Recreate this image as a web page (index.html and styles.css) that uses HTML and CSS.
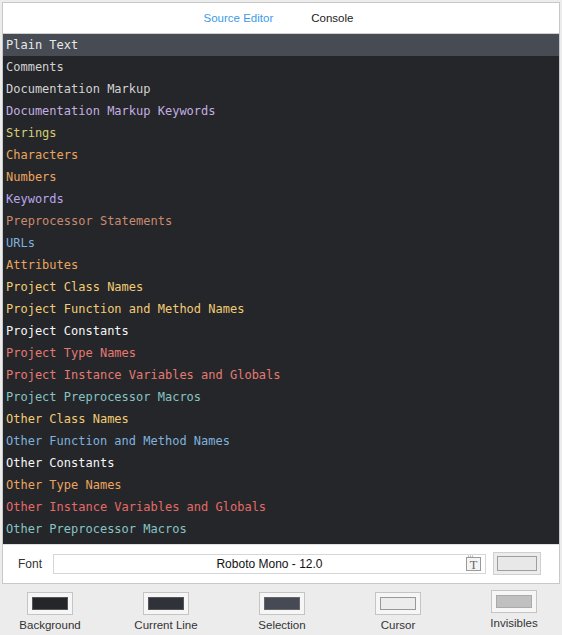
FILE: index.html
```html
<!DOCTYPE html>
<html>
<head>
<meta charset="utf-8">
<link rel="stylesheet" href="styles.css">
</head>
<body>
<div class="panel">
  <div class="tabs">
    <span class="tab active">Source Editor</span>
    <span class="tab">Console</span>
  </div>
  <ul class="list">
    <li class="sel c-plain">Plain Text</li>
    <li class="c-comment">Comments</li>
    <li class="c-comment">Documentation Markup</li>
    <li class="c-dockw">Documentation Markup Keywords</li>
    <li class="c-string">Strings</li>
    <li class="c-char">Characters</li>
    <li class="c-num">Numbers</li>
    <li class="c-kw">Keywords</li>
    <li class="c-pre">Preprocessor Statements</li>
    <li class="c-url">URLs</li>
    <li class="c-char">Attributes</li>
    <li class="c-class">Project Class Names</li>
    <li class="c-class">Project Function and Method Names</li>
    <li class="c-white">Project Constants</li>
    <li class="c-type">Project Type Names</li>
    <li class="c-type">Project Instance Variables and Globals</li>
    <li class="c-macro">Project Preprocessor Macros</li>
    <li class="c-class">Other Class Names</li>
    <li class="c-url">Other Function and Method Names</li>
    <li class="c-white">Other Constants</li>
    <li class="c-char">Other Type Names</li>
    <li class="c-red">Other Instance Variables and Globals</li>
    <li class="c-macro">Other Preprocessor Macros</li>
  </ul>
  <div class="fontrow">
    <span class="fontlabel">Font</span>
    <div class="fontfield">
      <span class="fontname">Roboto Mono - 12.0</span>
      <svg class="ticon" width="17" height="17" viewBox="0 0 17 17">
        <rect x="1.5" y="2.5" width="14" height="13" fill="#f4f4f4" stroke="#9a9a9a"/>
        <circle cx="3.5" cy="1.2" r="0.6" fill="#9a9a9a"/>
        <circle cx="5.5" cy="1.2" r="0.6" fill="#9a9a9a"/>
        <circle cx="7.5" cy="1.2" r="0.6" fill="#9a9a9a"/>
        <text x="8.5" y="13.8" text-anchor="middle" font-family="Liberation Serif, serif" font-size="12.5" fill="#666">T</text>
      </svg>
    </div>
    <div class="fontbtn"><span class="fontbtn-inner"></span></div>
  </div>
</div>
<div class="swatches">
  <div class="sw"><div class="well"><span class="chip bg"></span></div><span class="swlabel">Background</span></div>
  <div class="sw"><div class="well"><span class="chip cl"></span></div><span class="swlabel">Current Line</span></div>
  <div class="sw"><div class="well"><span class="chip se"></span></div><span class="swlabel">Selection</span></div>
  <div class="sw"><div class="well"><span class="chip cu"></span></div><span class="swlabel">Cursor</span></div>
  <div class="sw up"><div class="well"><span class="chip inv"></span></div><span class="swlabel">Invisibles</span></div>
</div>
</body>
</html>
```

FILE: styles.css
```css
* { box-sizing: border-box; }
html, body { margin: 0; padding: 0; }
body {
  background: #ececec;
  width: 562px;
  height: 635px;
  overflow: hidden;
  font-family: "Liberation Sans", Arial, sans-serif;
  padding: 2px 2px 0 2px;
}
.panel {
  width: 558px;
  height: 582px;
  background: #ffffff;
  border: 1px solid #c8c8c8;
  display: flex;
  flex-direction: column;
}
.tabs {
  height: 31px;
  flex: none;
  display: flex;
  justify-content: center;
  align-items: center;
  gap: 38px;
  font-size: 11.5px;
  color: #222;
  border-bottom: 1px solid #d0d0d0;
  padding-right: 5px;
  padding-bottom: 1px;
}
.tab.active { color: #3d9ae8; }
.list {
  list-style: none;
  flex: none;
  margin: 0;
  padding: 0 0 4px 0;
  background: #25262a;
  font-family: "DejaVu Sans Mono", "Liberation Mono", monospace;
  font-size: 12px;
  height: 510px;
}
.list li {
  height: 22px;
  line-height: 22px;
  padding-left: 3px;
  white-space: nowrap;
}
.list li.sel { background: #474b53; }
.c-plain { color: #e8e8e8; }
.c-comment { color: #d2d2d2; }
.c-dockw { color: #c3aee0; }
.c-string { color: #d6cd74; }
.c-char { color: #eba55e; }
.c-num { color: #eba55e; }
.c-kw { color: #b9a6ec; }
.c-pre { color: #c98a6e; }
.c-url { color: #7fb2dd; }
.c-class { color: #f2cc74; }
.c-white { color: #f6f6f6; }
.c-type { color: #e67a72; }
.c-red { color: #e46b66; }
.c-macro { color: #86c4c4; }
.fontrow {
  flex: 1;
  display: flex;
  align-items: center;
  padding: 0 17px 1px 15px;
  border-top: 1px solid #e0e0e0;
}
.fontlabel {
  font-size: 12px;
  color: #333;
  width: 35px;
}
.fontfield {
  position: relative;
  width: 433px;
  height: 20px;
  border: 1px solid #d6d6d6;
  display: flex;
  align-items: center;
  justify-content: center;
}
.fontname {
  font-size: 12px;
  color: #111;
}
.ticon {
  position: absolute;
  right: 3px;
  top: 0;
}
.fontbtn {
  margin-left: 7px;
  width: 48px;
  height: 23px;
  border: 1px solid #cfcfcf;
  background: #ececec;
  display: flex;
  align-items: center;
  justify-content: center;
}
.fontbtn-inner {
  width: 40px;
  height: 15px;
  border: 1px solid #9e9e9e;
  background: #e8e8e8;
}
.swatches {
  display: flex;
  padding: 6px 0 0 25px;
  gap: 70px;
}
.sw {
  width: 46px;
  display: flex;
  flex-direction: column;
  align-items: center;
  margin-top: 2px;
}
.sw.up { margin-top: 0; }
.well {
  width: 46px;
  height: 23px;
  border: 1px solid #c4c4c4;
  background: #f6f6f6;
  display: flex;
  align-items: center;
  justify-content: center;
}
.chip {
  width: 36px;
  height: 13px;
  border: 1px solid #8a8a8a;
}
.chip.bg { background: #25262a; border-color: #555; }
.chip.cl { background: #2f3238; border-color: #555; }
.chip.se { background: #454a54; border-color: #666; }
.chip.cu { background: #ececec; border-color: #999; }
.chip.inv { background: #c0c0c0; border-color: #aaa; }
.swlabel {
  margin-top: 4px;
  font-size: 11.5px;
  color: #333;
  white-space: nowrap;
}
```
